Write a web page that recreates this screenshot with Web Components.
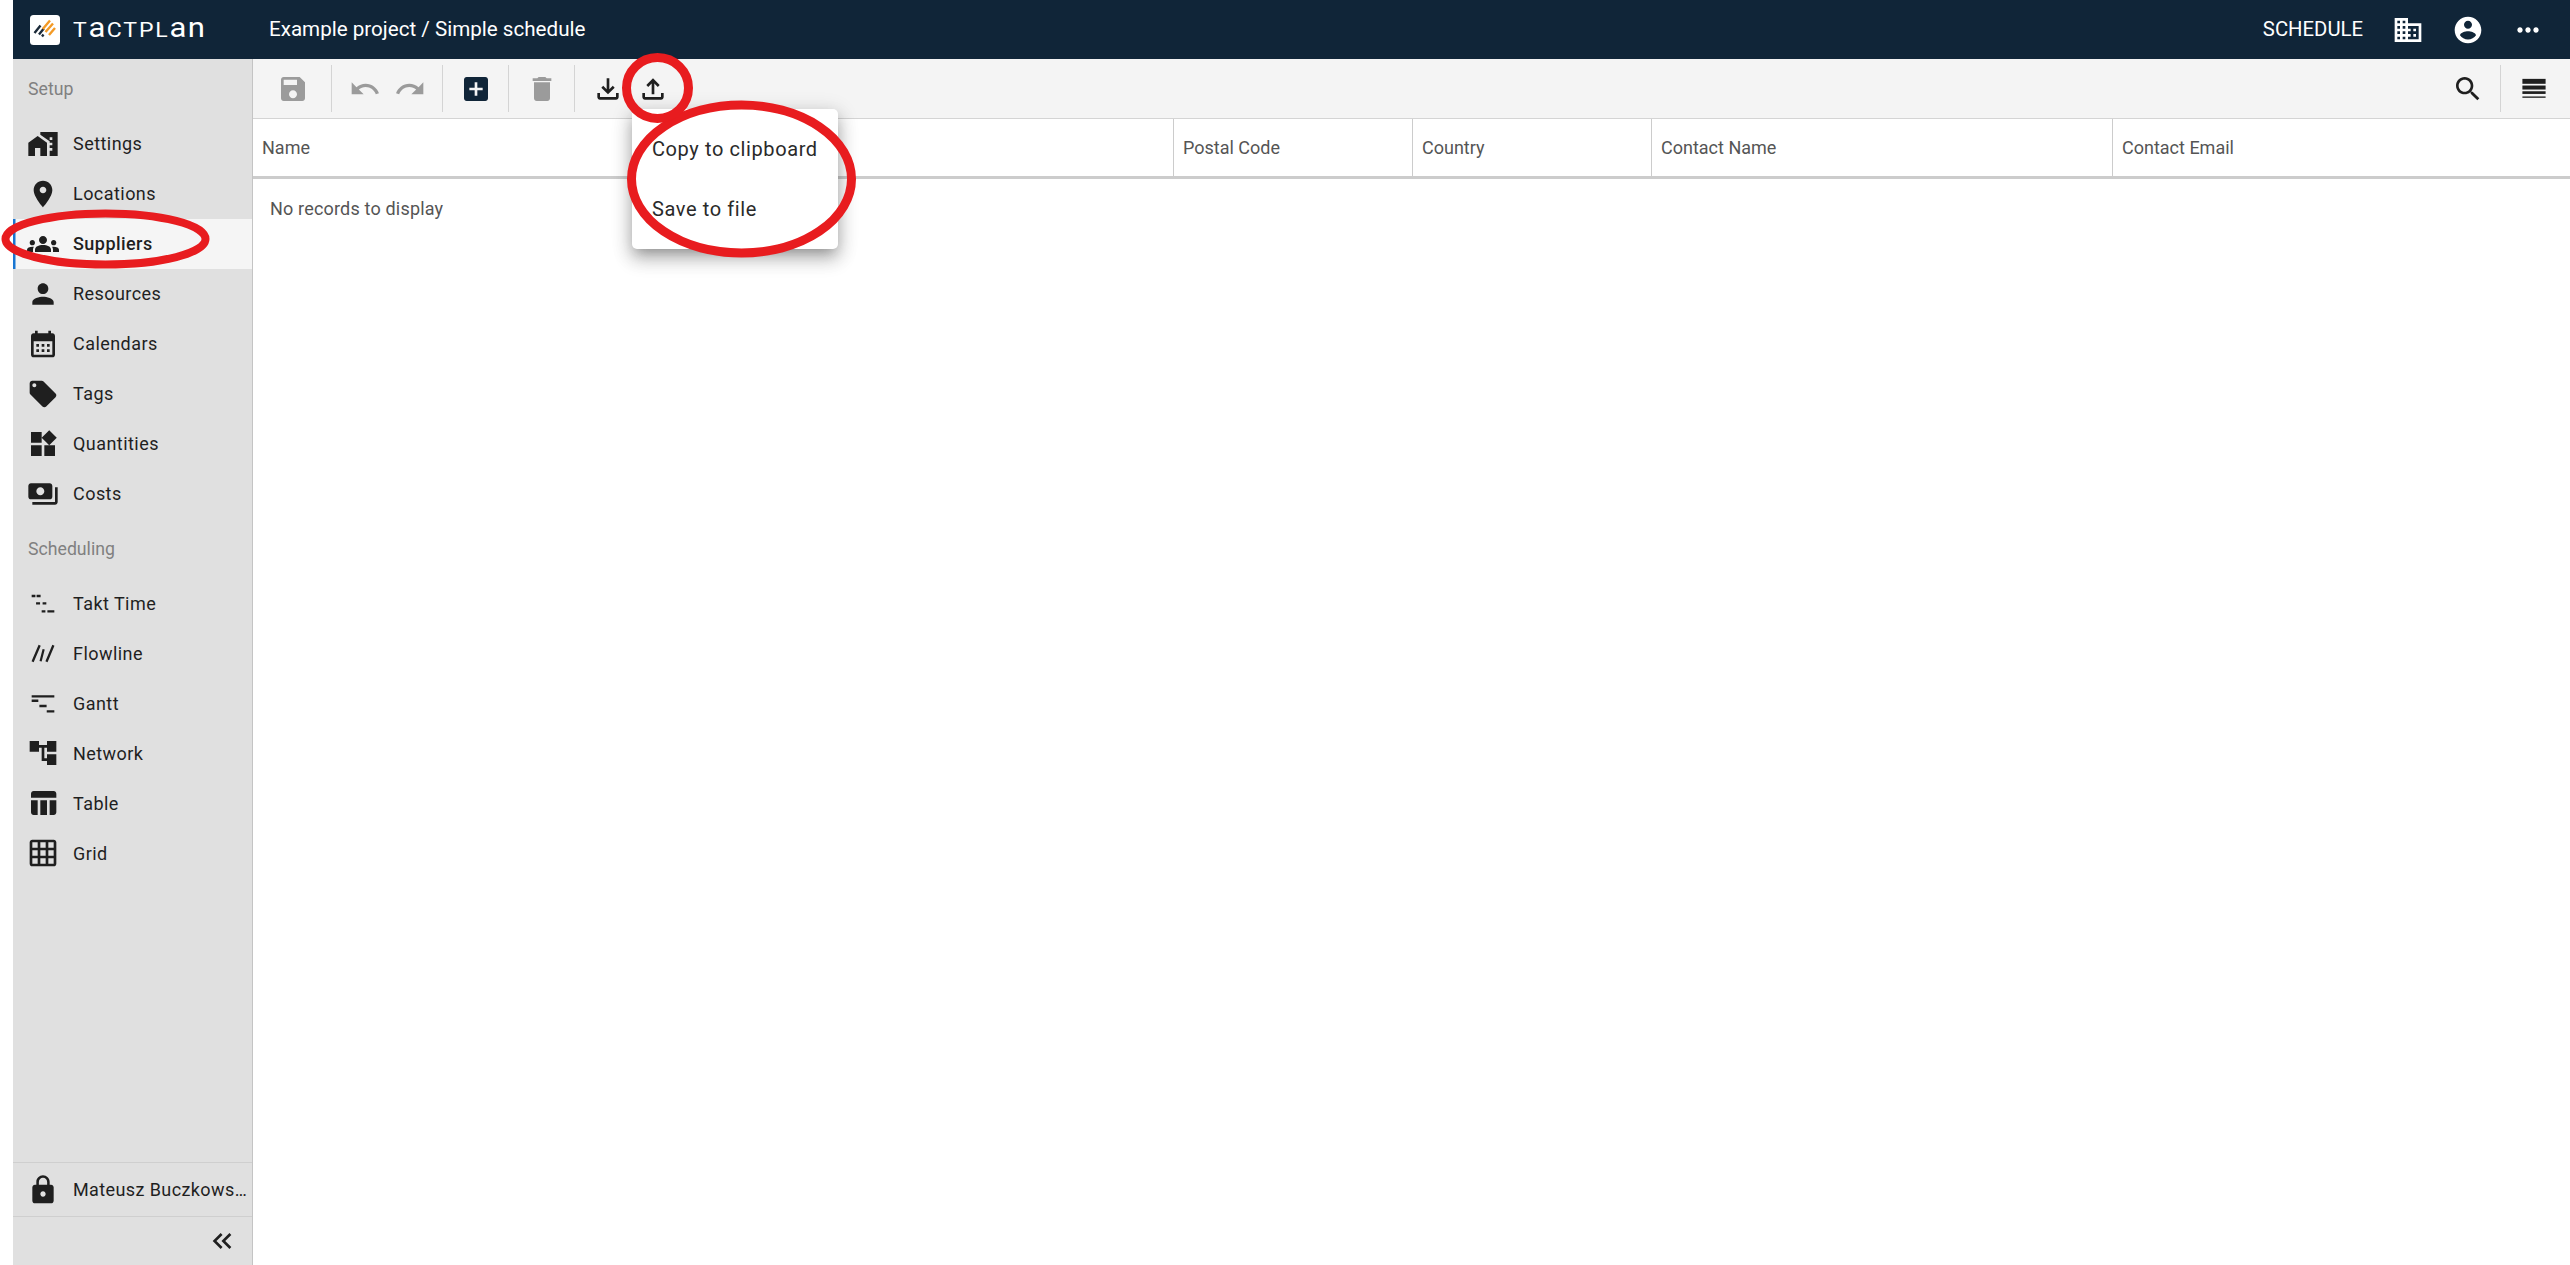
<!DOCTYPE html>
<html lang="en"><head><meta charset="utf-8"><title>Tactplan</title>
<style>
html,body{margin:0;padding:0;background:#fff;height:100%;overflow:hidden}
body{font-family:Roboto,"Liberation Sans",sans-serif}
</style></head><body>
<tp-app>
  <tp-topbar slot="top" title-text="Example project / Simple schedule"></tp-topbar>
  <tp-sidebar slot="side">
    <tp-nav-label>Setup</tp-nav-label>
    <tp-nav-item icon="settings">Settings</tp-nav-item>
    <tp-nav-item icon="place">Locations</tp-nav-item>
    <tp-nav-item icon="groups" active>Suppliers</tp-nav-item>
    <tp-nav-item icon="person">Resources</tp-nav-item>
    <tp-nav-item icon="calendar">Calendars</tp-nav-item>
    <tp-nav-item icon="tag">Tags</tp-nav-item>
    <tp-nav-item icon="widgets">Quantities</tp-nav-item>
    <tp-nav-item icon="payments">Costs</tp-nav-item>
    <tp-nav-label>Scheduling</tp-nav-label>
    <tp-nav-item icon="takt">Takt Time</tp-nav-item>
    <tp-nav-item icon="flowline">Flowline</tp-nav-item>
    <tp-nav-item icon="gantt">Gantt</tp-nav-item>
    <tp-nav-item icon="network">Network</tp-nav-item>
    <tp-nav-item icon="table">Table</tp-nav-item>
    <tp-nav-item icon="grid">Grid</tp-nav-item>
    <tp-sidebar-foot slot="foot" user="Mateusz Buczkows…"></tp-sidebar-foot>
  </tp-sidebar>
  <tp-toolbar slot="bar"></tp-toolbar>
  <tp-table slot="main"></tp-table>
  <tp-menu slot="over"><tp-menu-item>Copy to clipboard</tp-menu-item><tp-menu-item>Save to file</tp-menu-item></tp-menu>
  <tp-annotations slot="over"></tp-annotations>
</tp-app>
<script>
const ICONS={
save:'<path d="M17 3H5c-1.11 0-2 .9-2 2v14c0 1.1.89 2 2 2h14c1.1 0 2-.9 2-2V7l-4-4zm-5 16c-1.66 0-3-1.34-3-3s1.34-3 3-3 3 1.34 3 3-1.34 3-3 3zm3-10H5V5h10v4z"/>',
undo:'<path d="M12.5 8c-2.65 0-5.05.99-6.9 2.6L2 7v9h9l-3.62-3.62c1.39-1.16 3.16-1.88 5.12-1.88 3.54 0 6.55 2.31 7.6 5.5l2.37-.78C21.08 11.03 17.15 8 12.5 8z"/>',
redo:'<path d="M18.4 10.6C16.55 8.99 14.15 8 11.5 8c-4.65 0-8.58 3.03-9.96 7.22L3.9 16c1.05-3.19 4.05-5.5 7.6-5.5 1.95 0 3.73.72 5.12 1.88L13 16h9V7l-3.6 3.6z"/>',
add:'<path d="M19 3H5c-1.11 0-2 .9-2 2v14c0 1.1.89 2 2 2h14c1.1 0 2-.9 2-2V5c0-1.1-.9-2-2-2zm-2 10h-4v4h-2v-4H7v-2h4V7h2v4h4v2z"/>',
del:'<path d="M6 19c0 1.1.9 2 2 2h8c1.1 0 2-.9 2-2V7H6v12zM19 4h-3.5l-1-1h-5l-1 1H5v2h14V4z"/>',
download:'<path d="M18 15v3H6v-3H4v3c0 1.1.9 2 2 2h12c1.1 0 2-.9 2-2v-3h-2zm-1-4l-1.41-1.41L13 12.17V4h-2v8.17L8.41 9.59 7 11l5 5 5-5z"/>',
upload:'<path d="M18 15v3H6v-3H4v3c0 1.1.9 2 2 2h12c1.1 0 2-.9 2-2v-3h-2zM7 9l1.41 1.41L11 7.83V16h2V7.83l2.59 2.58L17 9l-5-5-5 5z"/>',
search:'<path d="M15.5 14h-.79l-.28-.27C15.41 12.59 16 11.11 16 9.5 16 5.91 13.09 3 9.5 3S3 5.91 3 9.5 5.91 16 9.5 16c1.61 0 3.09-.59 4.23-1.57l.27.28v.79l5 4.99L20.49 19l-4.99-5zm-6 0C7.01 14 5 11.99 5 9.5S7.01 5 9.5 5 14 7.01 14 9.5 11.99 14 9.5 14z"/>',
rows:'<rect x="3.3" y="4.4" width="17.4" height="3.7"/><rect x="3.3" y="9.4" width="17.4" height="3"/><rect x="3.3" y="13.7" width="17.4" height="2"/><rect x="3.3" y="17.6" width="17.4" height="1"/>',
domain:'<path d="M12 7V3H2v18h20V7H12zM6 19H4v-2h2v2zm0-4H4v-2h2v2zm0-4H4V9h2v2zm0-4H4V5h2v2zm4 12H8v-2h2v2zm0-4H8v-2h2v2zm0-4H8V9h2v2zm0-4H8V5h2v2zm10 12h-8v-2h2v-2h-2v-2h2v-2h-2V9h8v10zm-2-8h-2v2h2v-2zm0 4h-2v2h2v-2z"/>',
account:'<path d="M12 2C6.48 2 2 6.48 2 12s4.48 10 10 10 10-4.48 10-10S17.52 2 12 2zm0 3c1.66 0 3 1.34 3 3s-1.34 3-3 3-3-1.34-3-3 1.34-3 3-3zm0 14.2c-2.5 0-4.71-1.28-6-3.22.03-1.99 4-3.08 6-3.08 1.99 0 5.97 1.09 6 3.08-1.29 1.94-3.5 3.22-6 3.22z"/>',
more:'<path d="M6 10c-1.1 0-2 .9-2 2s.9 2 2 2 2-.9 2-2-.9-2-2-2zm12 0c-1.1 0-2 .9-2 2s.9 2 2 2 2-.9 2-2-.9-2-2-2zm-6 0c-1.1 0-2 .9-2 2s.9 2 2 2 2-.9 2-2-.9-2-2-2z"/>',
settings:'<path d="M1 11v10h5v-6h4v6h5V11L8 6z"/><path d="M10 3v1.97l7 5.03V11h2v2h-2v2h2v2h-2v4h6V3H10zm9 6h-2V7h2v2z"/>',
place:'<path d="M12 2C8.13 2 5 5.13 5 9c0 5.25 7 13 7 13s7-7.75 7-13c0-3.87-3.13-7-7-7zm0 9.5c-1.38 0-2.5-1.12-2.5-2.5s1.12-2.5 2.5-2.5 2.5 1.12 2.5 2.5-1.12 2.5-2.5 2.5z"/>',
groups:'<path d="M12 12.75c1.63 0 3.07.39 4.24.9 1.08.48 1.76 1.56 1.76 2.73V18H6v-1.61c0-1.18.68-2.26 1.76-2.73 1.17-.52 2.61-.91 4.24-.91zM4 13c1.1 0 2-.9 2-2s-.9-2-2-2-2 .9-2 2 .9 2 2 2zm1.13 1.1c-.37-.06-.74-.1-1.13-.1-.99 0-1.93.21-2.78.58C.48 14.9 0 15.62 0 16.43V18h4.5v-1.61c0-.83.23-1.61.63-2.29zM20 13c1.1 0 2-.9 2-2s-.9-2-2-2-2 .9-2 2 .9 2 2 2zm4 3.43c0-.81-.48-1.53-1.22-1.85-.85-.37-1.79-.58-2.78-.58-.39 0-.76.04-1.13.1.4.68.63 1.46.63 2.29V18H24v-1.57zM12 6c1.66 0 3 1.34 3 3s-1.34 3-3 3-3-1.34-3-3 1.34-3 3-3z"/>',
person:'<path d="M12 12c2.21 0 4-1.79 4-4s-1.79-4-4-4-4 1.79-4 4 1.79 4 4 4zm0 2c-2.67 0-8 1.34-8 4v2h16v-2c0-2.66-5.33-4-8-4z"/>',
calendar:'<path d="M19 4h-1V2h-2v2H8V2H6v2H5c-1.1 0-2 .9-2 2v14c0 1.1.9 2 2 2h14c1.1 0 2-.9 2-2V6c0-1.1-.9-2-2-2zm0 16H5V10h14v10zM9 14H7v-2h2v2zm4 0h-2v-2h2v2zm4 0h-2v-2h2v2zm-8 4H7v-2h2v2zm4 0h-2v-2h2v2zm4 0h-2v-2h2v2z"/>',
tag:'<path d="M21.41 11.58l-9-9C12.05 2.22 11.55 2 11 2H4c-1.1 0-2 .9-2 2v7c0 .55.22 1.05.59 1.42l9 9c.36.36.86.58 1.41.58.55 0 1.05-.22 1.41-.59l7-7c.37-.36.59-.86.59-1.41 0-.55-.23-1.06-.59-1.42zM5.5 7C4.67 7 4 6.33 4 5.5S4.67 4 5.5 4 7 4.67 7 5.5 6.33 7 5.5 7z"/>',
widgets:'<path d="M13 13v8h8v-8h-8zM3 21h8v-8H3v8zM3 3v8h8V3H3zm13.66-1.31L11 7.34 16.66 13l5.66-5.66-5.66-5.65z"/>',
payments:'<path d="M19 14V6c0-1.1-.9-2-2-2H3c-1.1 0-2 .9-2 2v8c0 1.1.9 2 2 2h14c1.1 0 2-.9 2-2zm-9-1c-1.66 0-3-1.34-3-3s1.34-3 3-3 3 1.34 3 3-1.34 3-3 3zm13-6v11c0 1.1-.9 2-2 2H4v-2h17V7h2z"/>',
takt:'<path d="M3.5 5.9h2.8v1.8H3.5zM7.2 5.9h3v1.8h-3zM6.8 11.4h3v1.8h-3zM11.7 11.4h2.8v1.8h-2.8zM11 17.4h2.8v1.8H11zM15.3 17.4h5.2v1.8h-5.2z"/>',
flowline:'<path d="M3.4 18.2 8.7 5.9l1.6.7-5.3 12.3zM9.4 18l2.3-9 1.6.4-2.3 9zM13.8 18.2 19 5.9l1.6.7-5.2 12.3z"/>',
gantt:'<path d="M3.5 6.1h17v1.8h-17zM3.5 9.4h5v1.8h-5zM9.3 13.4h5.4v1.8H9.3zM14.8 17.4h5.7v1.8h-5.7z"/>',
network:'<path d="M22 11V3h-7v3H9V3H2v8h7V8h2v10h4v3h7v-8h-7v3h-2V8h2v3h7z"/>',
table:'<path d="M10 10.02h5V21h-5zM17 21h3c1.1 0 2-.9 2-2v-9h-5v11zm3-18H5c-1.1 0-2 .9-2 2v3h19V5c0-1.1-.9-2-2-2zM3 19c0 1.1.9 2 2 2h3V10H3v9z"/>',
grid:'<path d="M20 2H4c-1.1 0-2 .9-2 2v16c0 1.1.9 2 2 2h16c1.1 0 2-.9 2-2V4c0-1.1-.9-2-2-2zM8 20H4v-4h4v4zm0-6H4v-4h4v4zm0-6H4V4h4v4zm6 12h-4v-4h4v4zm0-6h-4v-4h4v4zm0-6h-4V4h4v4zm6 12h-4v-4h4v4zm0-6h-4v-4h4v4zm0-6h-4V4h4v4z"/>',
lock:'<path d="M18 8h-1V6c0-2.76-2.24-5-5-5S7 3.24 7 6v2H6c-1.1 0-2 .9-2 2v10c0 1.1.9 2 2 2h12c1.1 0 2-.9 2-2V10c0-1.1-.9-2-2-2zm-6 9c-1.1 0-2-.9-2-2s.9-2 2-2 2 .9 2 2-.9 2-2 2zm3.1-9H8.9V6c0-1.71 1.39-3.1 3.1-3.1 1.71 0 3.1 1.39 3.1 3.1v2z"/>',
dleft:'<path d="M17.59 18L19 16.59 14.42 12 19 7.41 17.59 6l-6 6zM11 18l1.41-1.41L7.83 12l4.58-4.59L11 6l-6 6z"/>'
};
function def(name,css,html,init){
  customElements.define(name,class extends HTMLElement{
    constructor(){super();this.attachShadow({mode:'open'});}
    connectedCallback(){
      const h=typeof html==='function'?html(this):html;
      this.shadowRoot.innerHTML='<style>'+css+'</style>'+h;
      if(init)init(this);
    }
  });
}
def('tp-icon',':host{display:block;width:32px;height:32px;flex:none;color:inherit}svg{display:block;width:100%;height:100%;fill:currentColor}',
  el=>'<svg viewBox="0 0 24 24" aria-hidden="true">'+(ICONS[el.getAttribute('name')]||'')+'</svg>');
def('tp-app',`:host{display:grid;grid-template-columns:240px 1fr;grid-template-rows:59px 60px 1fr;margin-left:13px;height:1265px;position:relative;color:#1f1f1f}`,
  `<slot name="top" style="display:block;grid-column:1/3"></slot>
   <slot name="side" style="display:flex;grid-row:2/4;min-height:0"></slot>
   <slot name="bar" style="display:block"></slot>
   <slot name="main" style="display:block"></slot>
   <slot name="over"></slot>`);
def('tp-topbar',`:host{display:flex;align-items:center;height:59px;background:#102538;color:#fff;padding-left:17px;padding-right:26px;box-sizing:border-box}
  .mark{width:30px;height:30px;flex:none}
  .wrap{margin-left:13px;width:196px;flex:none}
  .word{display:inline-block;transform:scaleX(1.15);transform-origin:0 50%;font:400 20px/30px Roboto,sans-serif;letter-spacing:1.6px;white-space:nowrap}
  .word span{text-transform:lowercase;font-size:27px;line-height:20px;letter-spacing:1.2px}
  .title{font:400 20.6px/1 Roboto,sans-serif;white-space:nowrap}
  .sp{flex:1}
  .sched{font:400 20.3px/1 Roboto,sans-serif;margin-right:29px}
  tp-icon+tp-icon{margin-left:28px}`,
  el=>`<svg class="mark" viewBox="0 0 30 30" aria-hidden="true"><rect width="30" height="30" rx="3.5" fill="#fff"/>
    <g stroke-width="2.4" fill="none"><path d="M4.5 18 10.5 10.5M9 19.5 13.8 13.5" stroke="#1c2b3a"/><path d="M12 21.5l1.5-2" stroke="#1c2b3a"/><path d="M12.8 14 20 5.5M15.5 17 23 8.5M19 20l6-7" stroke="#f39a26"/></g></svg>
    <div class="wrap"><div class="word">T<span>A</span>CTPL<span>AN</span></div></div>
    <div class="title">${el.getAttribute('title-text')}</div><div class="sp"></div>
    <div class="sched">SCHEDULE</div><tp-icon name="domain"></tp-icon><tp-icon name="account"></tp-icon><tp-icon name="more"></tp-icon>`);
def('tp-sidebar',`:host{display:flex;flex-direction:column;width:240px;box-sizing:border-box;background:#e0e0e0;border-right:1.5px solid #c4c4c4;height:100%}
  .list{flex:1;min-height:0}`,
  `<div class="list"><slot></slot></div><slot name="foot"></slot>`);
def('tp-nav-label',`:host{display:block;height:59.5px;box-sizing:border-box;padding-left:15px;font:400 17.7px/60px Roboto,sans-serif;color:#808080}`,'<slot></slot>');
def('tp-nav-item',`:host{display:flex;align-items:center;height:50px;box-sizing:border-box;padding-left:14px;font:400 18px/1 Roboto,sans-serif;letter-spacing:.45px;color:#1f1f1f}
  :host([active]){background:#f5f5f5;box-shadow:inset 2.5px 0 0 #1976d2;font-weight:500}
  .t{margin-left:14px;white-space:nowrap;padding-top:1.5px}`,
  el=>`<tp-icon name="${el.getAttribute('icon')}"></tp-icon><span class="t"><slot></slot></span>`);
def('tp-sidebar-foot',`:host{display:block;font:400 18px/1 Roboto,sans-serif;letter-spacing:.4px;color:#1f1f1f}
  .u{display:flex;align-items:center;height:55px;box-sizing:border-box;padding-left:14px;border-top:1.5px solid #cfcfcf;border-bottom:1.5px solid #cfcfcf;white-space:nowrap}
  .u span{margin-left:14px}
  .c{display:flex;justify-content:flex-end;align-items:center;height:48px;padding-right:14px}`,
  el=>`<div class="u"><tp-icon name="lock"></tp-icon><span>${el.getAttribute('user')}</span></div><div class="c"><tp-icon name="dleft"></tp-icon></div>`);
def('tp-tool',`:host{display:flex;width:45px;height:47px;align-items:center;justify-content:center;color:#1f1f1f;flex:none}
  :host([off]){color:#9b9b9b}:host([navy]){color:#102538}`,
  el=>`<tp-icon name="${el.getAttribute('icon')}"></tp-icon>`);
def('tp-group',`:host{display:flex;box-sizing:border-box;height:47px;padding:0 10px;border-right:1.5px solid #d4d4d4;flex:none}`,'<slot></slot>');
def('tp-toolbar',`:host{display:flex;align-items:center;height:60px;background:#f4f4f4;border-bottom:1.5px solid #d4d4d4;box-sizing:border-box;padding-right:4px}
  .sp{flex:1}
  tp-group.first{width:79px;padding:0 0 0 17px}
  tp-group.last{border:0}
  tp-group.up{padding-left:10px}
  tp-group.r{padding:0 10px 0 0}`,
  `<tp-group class="first"><tp-tool icon="save" off></tp-tool></tp-group>
   <tp-group><tp-tool icon="undo" off></tp-tool><tp-tool icon="redo" off></tp-tool></tp-group>
   <tp-group><tp-tool icon="add" navy></tp-tool></tp-group>
   <tp-group><tp-tool icon="del" off></tp-tool></tp-group>
   <tp-group class="last up"><tp-tool icon="download"></tp-tool><tp-tool icon="upload"></tp-tool></tp-group>
   <div class="sp"></div>
   <tp-group class="r"><tp-tool icon="search"></tp-tool></tp-group>
   <tp-group class="last"><tp-tool icon="rows"></tp-tool></tp-group>`);
def('tp-table',`:host{display:block;background:#fff;font:400 18px/1 Roboto,sans-serif;color:#555}
  .h{display:grid;grid-template-columns:920px 239px 239px 461px 1fr;height:60px;box-sizing:border-box;border-bottom:3px solid #ccc}
  .c{display:flex;align-items:center;padding-left:9px;border-left:1px solid #ccc;white-space:nowrap}
  .c:first-child{border-left:0}
  .e{padding:0 17px;height:60px;display:flex;align-items:center;letter-spacing:.18px}`,
  `<div class="h"><div class="c">Name</div><div class="c">Postal Code</div><div class="c">Country</div><div class="c">Contact Name</div><div class="c">Contact Email</div></div>
   <div class="e">No records to display</div>`);
def('tp-menu',`:host{position:absolute;left:619px;top:109px;width:206px;box-sizing:border-box;padding:10px 0;background:#fff;border-radius:5px;
  box-shadow:0 7px 12px -5px rgba(0,0,0,.28),0 10px 18px 2px rgba(0,0,0,.16),0 4px 20px 3px rgba(0,0,0,.12)}`,'<slot></slot>');
def('tp-menu-item',`:host{display:flex;align-items:center;height:60px;padding-left:20px;font:400 20px/1 Roboto,sans-serif;letter-spacing:.6px;color:#2a2a2a;white-space:nowrap}`,'<slot></slot>');
def('tp-annotations',`:host{position:absolute;left:-13px;top:0;width:2570px;height:1265px;pointer-events:none}svg{display:block}`,
  `<svg width="2570" height="1265" viewBox="0 0 2570 1265" fill="none" stroke="#e81c1f" aria-hidden="true">
    <ellipse cx="105.5" cy="239" rx="100" ry="25.5" stroke-width="8"/>
    <ellipse cx="741.5" cy="179" rx="110" ry="74" stroke-width="9"/>
    <ellipse cx="657.5" cy="88" rx="31" ry="30.5" stroke-width="9"/>
  </svg>`);
</script>
</body></html>
